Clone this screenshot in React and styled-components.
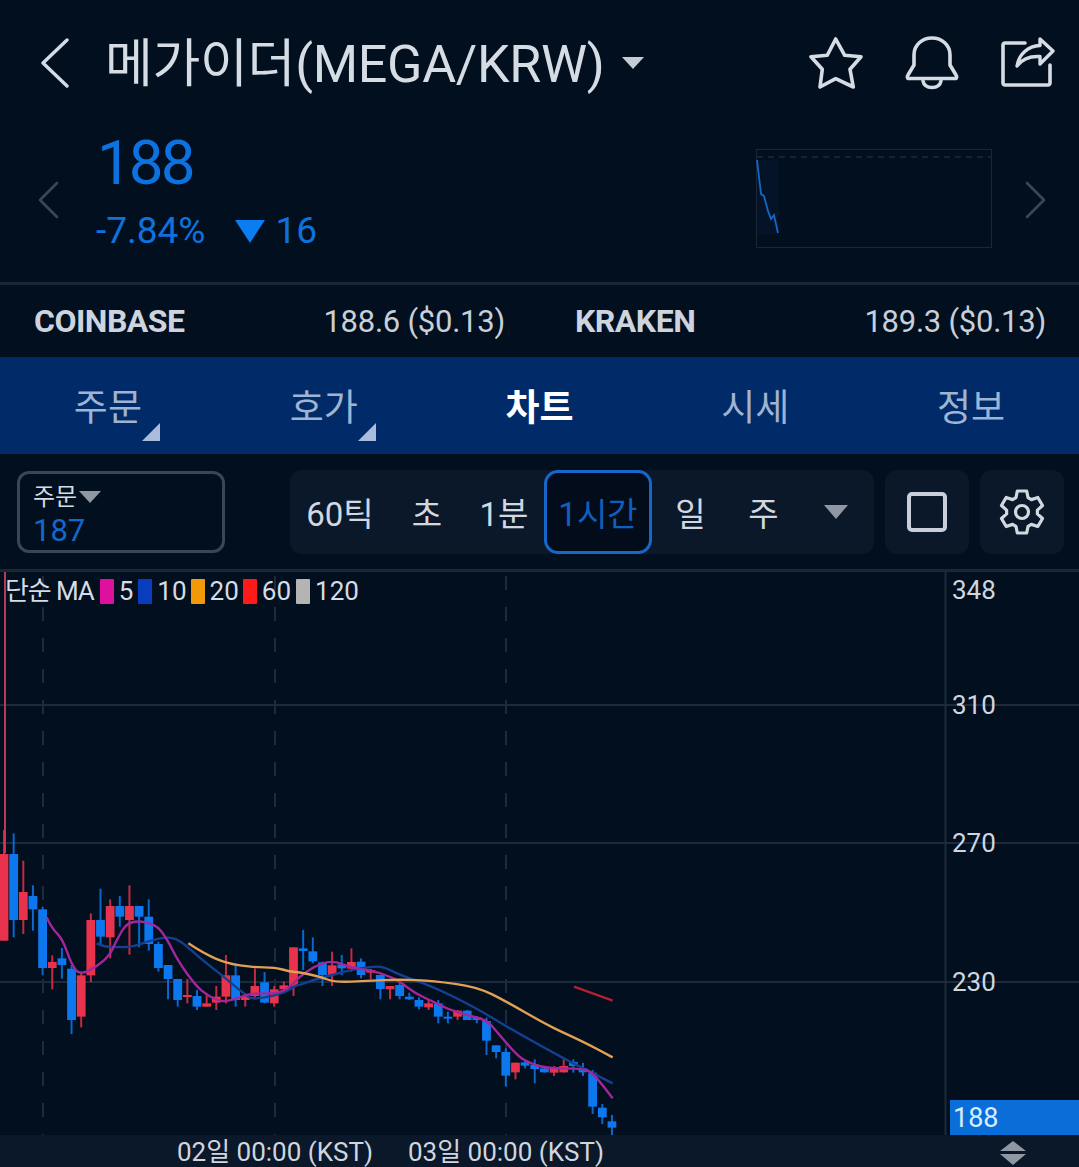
import React from 'react'
import styled, { createGlobalStyle } from 'styled-components'

const GlobalStyle = createGlobalStyle`
    html, body {
        margin: 0;
        padding: 0;
        background: #020f1f;
    }
    * {
        box-sizing: border-box;
    }
`;

const Page = styled.div`
    width: 1079px;
    height: 1167px;
    overflow: hidden;
    background: #020f1f;
    color: #d6dce4;
    font-family: Roboto, "Noto Sans CJK KR", sans-serif;
    display: flex;
    flex-direction: column;
`;

const Header = styled.header`
    height: 130px;
    display: flex;
    align-items: center;
    padding: 0 24px 4px 41px;
`;

const Title = styled.h1`
    margin: 0 0 8px 36px;
    font-size: 52px;
    font-weight: 400;
    letter-spacing: -0.3px;
    color: #d6dce4;
    white-space: nowrap;
`;

const TitleCaret = styled.span`
    width: 0;
    height: 0;
    margin-left: 17px;
    border-left: 11px solid transparent;
    border-right: 11px solid transparent;
    border-top: 12px solid #c6ccd4;
`;

const HeaderIcons = styled.div`
    margin-left: auto;
    display: flex;
    align-items: center;
    gap: 41px;
`;

const PriceRow = styled.section`
    height: 155px;
    border-bottom: 3px solid #1b2736;
    display: flex;
    align-items: center;
    padding: 0 33px 26px 38px;
`;

const PrevPad = styled.div`
    margin-top: 14px;
    display: flex;
`;

const PriceBlock = styled.div`
    margin-left: 38px;
    display: flex;
    flex-direction: column;
    gap: 10px;
    color: #0d72dd;
`;

const PriceValue = styled.div`
    font-size: 62px;
    line-height: 66px;
    letter-spacing: -3px;
`;

const ChangeRow = styled.div`
    display: flex;
    align-items: center;
    font-size: 37px;
    line-height: 50px;
    margin-left: -1px;
`;

const DownMark = styled.span`
    width: 0;
    height: 0;
    margin: 0 10px 0 30px;
    border-left: 15px solid transparent;
    border-right: 15px solid transparent;
    border-top: 23px solid #0a7df0;
`;

const Spark = styled.svg`
    margin-left: auto;
    margin-top: 11px;
    width: 236px;
    height: 99px;
`;

const NextPad = styled.div`
    margin: 14px 0 0 33px;
    display: flex;
`;

const ExchangeRow = styled.section`
    height: 72px;
    display: grid;
    grid-template-columns: 1fr 1fr;
    column-gap: 70px;
    padding: 0 33px 0 34px;
    align-items: center;
`;

const Exchange = styled.div`
    display: flex;
    justify-content: space-between;
    align-items: baseline;
    font-size: 31px;
    letter-spacing: -0.25px;
    color: #c8cfd9;
`;

const ExchangeName = styled.span`
    font-size: 32px;
    font-weight: 700;
    letter-spacing: -0.5px;
    color: #cdd4dd;
`;

const Tabs = styled.nav`
    height: 97px;
    display: flex;
    background: #012a68;
`;

const Tab = styled.div`
    position: relative;
    flex: 1;
    display: flex;
    align-items: center;
    justify-content: center;
    padding-bottom: 2px;
    font-size: 37px;
    font-weight: ${p => (p.$active ? 700 : 400)};
    color: ${p => (p.$active ? '#ffffff' : '#9fb3d2')};
`;

const TabCorner = styled.span`
    position: absolute;
    right: 56px;
    bottom: 13px;
    width: 0;
    height: 0;
    border-left: 18px solid transparent;
    border-bottom: 18px solid #a9bcdc;
`;

const Toolbar = styled.section`
    height: 118px;
    display: flex;
    align-items: center;
    padding: 0 15px 0 17px;
    border-bottom: 3px solid #1b2736;
`;

const OrderBox = styled.div`
    width: 208px;
    height: 82px;
    border: 3px solid #3b4654;
    border-radius: 12px;
    padding: 9px 13px;
    display: flex;
    flex-direction: column;
`;

const OrderLabel = styled.div`
    display: flex;
    align-items: center;
    font-size: 24px;
    line-height: 28px;
    color: #d6dce4;
`;

const OrderCaret = styled.span`
    width: 0;
    height: 0;
    margin-left: 2px;
    border-left: 11px solid transparent;
    border-right: 11px solid transparent;
    border-top: 12px solid #8f97a2;
`;

const OrderValue = styled.div`
    font-size: 31px;
    line-height: 39px;
    color: #1368c8;
`;

const Segments = styled.div`
    margin-left: 65px;
    width: 584px;
    height: 84px;
    display: flex;
    background: #0b182a;
    border-radius: 12px;
`;

const Segment = styled.div`
    width: ${p => p.$w}px;
    display: flex;
    align-items: center;
    justify-content: center;
    font-size: 33px;
    color: ${p => (p.$active ? '#0f5fbd' : '#d2d8e0')};
    background: ${p => (p.$active ? '#020c1b' : 'transparent')};
    border: ${p => (p.$active ? '3px solid #1667c9' : 'none')};
    border-radius: 14px;
`;

const SegmentCaret = styled.span`
    width: 0;
    height: 0;
    border-left: 12px solid transparent;
    border-right: 12px solid transparent;
    border-top: 14px solid #8f97a2;
`;

const SquareButton = styled.div`
    width: 84px;
    height: 84px;
    margin-left: 11px;
    display: flex;
    align-items: center;
    justify-content: center;
    background: #0b182a;
    border-radius: 12px;
`;

const Frame = styled.span`
    width: 40px;
    height: 40px;
    border: 4px solid #c8cfd8;
    border-radius: 5px;
`;

const ChartArea = styled.section`
    position: relative;
    flex: 1;
`;

const ChartSvg = styled.svg`
    display: block;
    width: 1079px;
    height: 100%;
`;

const Legend = styled.div`
    position: absolute;
    left: 5px;
    top: 3px;
    display: flex;
    align-items: center;
    font-size: 26px;
    line-height: 32px;
    color: #d6dce4;
`;

const LegendTitle = styled.span`
    margin-right: 6px;
    letter-spacing: -1.1px;
`;

const LegendText = styled.span`
    margin-right: ${p => p.$after || 4}px;
`;

const Swatch = styled.span`
    width: 14px;
    height: 25px;
    margin-right: 5px;
    border-radius: 1px;
    background: ${p => p.$color};
`;

const AxisLabel = styled.span`
    position: absolute;
    left: 952px;
    top: ${p => p.$top}px;
    font-size: 26px;
    line-height: 30px;
    color: #d0d6df;
`;

const LastPrice = styled.div`
    position: absolute;
    left: 950px;
    right: 0;
    bottom: 0;
    height: 35px;
    padding-left: 3px;
    background: #0a6ed8;
    color: #d8ecff;
    font-size: 27px;
    line-height: 37px;
`;

const TimeAxis = styled.footer`
    position: relative;
    height: 32px;
    background: #0b182a;
`;

const TimeLabel = styled.span`
    position: absolute;
    left: ${p => p.$left}px;
    top: 0;
    transform: translateX(-50%);
    font-size: 26px;
    line-height: 35px;
    white-space: nowrap;
    color: #d0d6df;
`;

const Scaler = styled.svg`
    position: absolute;
    left: 998px;
    top: 5px;
`;

const RED = '#e9304b';
const BLUE = '#0a78ee';

// [up?, wick top, body top, body bottom, wick bottom], y as read off the zoomed crops
const CANDLES_A = [
    [1, 0, 72, 332, 332], [0, 10, 72, 270, 322], [1, 92, 186, 270, 312], [0, 166, 198, 238, 302],
    [0, 230, 238, 414, 436], [1, 376, 396, 414, 478], [0, 354, 385, 405, 446], [0, 405, 416, 570, 612],
    [1, 428, 436, 560, 592], [1, 250, 270, 436, 456], [0, 176, 270, 320, 345], [1, 208, 228, 322, 385],
    [0, 198, 228, 260, 290], [1, 166, 228, 270, 374], [0, 228, 228, 260, 352], [0, 208, 260, 342, 362],
    [0, 335, 342, 414, 425], [0, 405, 405, 447, 508], [0, 447, 447, 510, 530], [1, 447, 495, 500, 520],
    [0, 480, 498, 530, 540], [1, 490, 520, 530, 530], [1, 468, 500, 518, 540], [1, 375, 436, 500, 520],
    [0, 408, 436, 510, 530], [1, 490, 498, 510, 530], [1, 415, 468, 498, 508], [0, 426, 457, 518, 520],
    [1, 468, 478, 520, 530], [1, 455, 466, 478, 490], [1, 352, 352, 468, 498],
];

const CANDLES_B = [
    [0, 30, 85, 93, 150], [0, 52, 94, 124, 130], [0, 125, 127, 165, 198], [1, 95, 136, 165, 198],
    [0, 105, 133, 145, 165], [1, 85, 126, 146, 155], [0, 115, 125, 165, 175], [1, 147, 150, 158, 178],
    [0, 165, 165, 207, 238], [1, 198, 198, 208, 238], [0, 185, 195, 228, 238], [0, 218, 230, 238, 240],
    [0, 232, 240, 260, 268], [1, 240, 250, 262, 270], [0, 240, 250, 290, 310], [0, 275, 290, 296, 310],
    [1, 270, 272, 290, 300], [0, 270, 272, 300, 300], [0, 288, 292, 300, 310], [0, 293, 303, 362, 405],
    [0, 376, 376, 396, 415], [0, 385, 396, 467, 500], [1, 428, 428, 457, 478], [0, 420, 427, 437, 445],
    [0, 418, 434, 447, 490], [0, 438, 445, 457, 458], [1, 438, 442, 458, 468], [1, 418, 438, 457, 458],
    [0, 418, 426, 438, 458], [0, 428, 445, 457, 468], [0, 450, 458, 560, 582], [0, 552, 563, 592, 612],
    [0, 585, 604, 623, 645],
];

const fromA = ([x, y]) => [x / 3, y / 3 + 258];
const fromB = ([x, y]) => [x / 3 + 300, y / 3 + 348];

// midpoint smoothing so the averages don't look like polylines
const smooth = pts => {
    let d = `M${pts[0][0]} ${pts[0][1]}`;
    for (let i = 1; i < pts.length - 1; i++) {
        const mx = (pts[i][0] + pts[i + 1][0]) / 2;
        const my = (pts[i][1] + pts[i + 1][1]) / 2;
        d += ` Q${pts[i][0]} ${pts[i][1]} ${mx} ${my}`;
    }
    const last = pts[pts.length - 1];
    return `${d} L${last[0]} ${last[1]}`;
};

const candles = [
    ...CANDLES_A.map(([up, ...ys]) => [up, ...ys.map(y => y / 3 + 258)]),
    ...CANDLES_B.map(([up, ...ys]) => [up, ...ys.map(y => y / 3 + 348)]),
];

const MA5 = smooth([
    ...[[140, 262], [155, 295], [187, 325], [215, 405], [240, 435], [290, 410], [330, 375], [350, 330], [385, 270], [465, 280], [500, 325], [535, 395], [590, 470], [622, 495], [650, 510], [680, 515], [738, 495], [767, 490], [850, 490], [900, 440]].map(fromA),
    ...[[0, 170], [40, 140], [97, 120], [155, 145], [213, 150], [270, 170], [300, 185], [345, 220], [400, 245], [445, 268], [500, 285], [560, 300], [590, 335], [650, 405], [680, 425], [735, 445], [850, 445], [880, 460], [938, 535]].map(fromB),
]);

const MA10 = smooth([
    ...[[290, 340], [310, 350], [360, 352], [400, 350], [440, 335], [500, 320], [540, 330], [600, 385], [665, 435], [730, 490], [760, 510], [850, 490], [890, 465]].map(fromA),
    ...[[0, 195], [40, 180], [97, 165], [150, 150], [213, 140], [250, 140], [300, 165], [400, 200], [530, 265], [620, 320], [790, 415], [850, 445], [938, 490]].map(fromB),
]);

const MA20 = smooth([
    ...[[565, 340], [610, 370], [680, 400], [760, 412], [825, 412], [870, 425]].map(fromA),
    ...[[0, 157], [60, 170], [105, 187], [200, 183], [300, 178], [400, 183], [530, 200], [620, 245], [740, 315], [850, 365], [938, 412]].map(fromB),
]);

const MA60 = smooth([[822, 200], [938, 242]].map(fromB));

const gearOutline = () => {
    const pts = [];
    for (let i = 0; i < 6; i++) {
        const a = -Math.PI / 2 + (i * Math.PI) / 3;
        [[15.5, -0.4], [21.5, -0.22], [21.5, 0.22], [15.5, 0.4]].forEach(([r, da]) => {
            pts.push(`${(24 + r * Math.cos(a + da)).toFixed(2)} ${(24 + r * Math.sin(a + da)).toFixed(2)}`);
        });
    }
    return `M${pts.join(' L')} Z`;
};

function Chevron({ dir, w, h, color, sw }) {
    const d = dir === 'left' ? `M${w - 2} 2 L2 ${h / 2} L${w - 2} ${h - 2}` : `M2 2 L${w - 2} ${h / 2} L2 ${h - 2}`;
    return (
        <svg width={w} height={h} viewBox={`0 0 ${w} ${h}`} fill="none">
            <path d={d} stroke={color} strokeWidth={sw} strokeLinecap="round" strokeLinejoin="round" />
        </svg>
    );
}

function StarIcon() {
    return (
        <svg width="54" height="52" viewBox="0 0 54 52" fill="none">
            <path d="M26.700 2 L35.700 18.300 L52 19.700 L41 32.300 L44.300 50 L26.700 41.700 L11 50 L13.300 32.300 L2 19.700 L18.300 18.300 Z" stroke="#d6dce4" strokeWidth="3.6" strokeLinejoin="round" />
        </svg>
    );
}

function BellIcon() {
    return (
        <svg width="56" height="54" viewBox="0 0 56 54" fill="none">
            <path d="M5 42.500 C3 42.500 3 40 4 39 L10 29 L10 19 C10 9 18 2 28 2 C38 2 46 9 46 19 L46 29 L52 39 C53 40 53 42.500 51 42.500 Z" stroke="#d6dce4" strokeWidth="3.6" strokeLinejoin="round" />
            <path d="M19 45 C20 50 24 51.500 28 51.500 C32 51.500 36 50 37 45" stroke="#d6dce4" strokeWidth="3.6" strokeLinecap="round" />
        </svg>
    );
}

function ShareIcon() {
    return (
        <svg width="54" height="52" viewBox="0 0 54 52" fill="none">
            <path d="M24 6 L4 6 C3 6 2 7 2 8 L2 46 C2 47 3 48 4 48 L47 48 C48 48 49 47 49 46 L49 28" stroke="#d6dce4" strokeWidth="3.6" strokeLinecap="round" />
            <path d="M39 2 L52 14 L39 27 L39 19.500 C30 19 21 22 16 29 C18 17 27 9 39 8.500 Z" stroke="#d6dce4" strokeWidth="3.400" strokeLinejoin="round" />
        </svg>
    );
}

function GearIcon() {
    return (
        <svg width="48" height="48" viewBox="0 0 48 48" fill="none" stroke="#d2d8e0" strokeWidth="3.2" strokeLinejoin="round">
            <path d={gearOutline()} />
            <circle cx="24" cy="24" r="6.500" />
        </svg>
    );
}

function Sparkline() {
    return (
        <Spark viewBox="0 0 236 99">
            <rect x="0.5" y="0.5" width="235" height="98" fill="none" stroke="#1b2736" />
            <line x1="1" y1="8" x2="235" y2="8" stroke="#1f2b3a" strokeWidth="1.5" strokeDasharray="6 5" />
            <rect x="1" y="11" width="21" height="74" fill="#0a1d3a" opacity="0.35" />
            <polyline points="1,11 5,45 8,47 12,62 15,70 18,66 22,84" fill="none" stroke="#1468c8" strokeWidth="1.8" />
        </Spark>
    );
}

function Chart() {
    return (
        <ChartSvg viewBox="0 0 1079 563">
            <defs>
                <filter id="soft" x="-5%" y="-5%" width="110%" height="110%">
                    <feGaussianBlur stdDeviation="0.45" />
                </filter>
            </defs>
            {[133, 271, 410].map(y => (
                <line key={y} x1="0" y1={y} x2="1079" y2={y} stroke="#1c2a3b" strokeWidth="2" />
            ))}
            {[43, 275, 506].map(x => (
                <line key={x} x1={x} y1="4" x2={x} y2="563" stroke="#1c2a3b" strokeWidth="2" strokeDasharray="14 17" />
            ))}
            <line x1="945.500" y1="0" x2="945.500" y2="563" stroke="#1c2a3b" strokeWidth="2" />
            <line x1="5" y1="0" x2="5" y2="281" stroke="#b83a55" strokeWidth="2" />
            <g filter="url(#soft)">
                {candles.map(([up, wt, bt, bb, wb], i) => {
                    const x = 4 + i * 9.65;
                    const color = up ? RED : BLUE;
                    return (
                        <g key={i}>
                            <line x1={x} y1={wt} x2={x} y2={wb} stroke={color} strokeWidth="2" opacity="0.85" />
                            <rect x={x - 4.400} y={bt} width="8.800" height={Math.max(bb - bt, 2)} fill={color} />
                        </g>
                    );
                })}
                <path d={MA10} fill="none" stroke="#13418f" strokeWidth="2.400" />
                <path d={MA5} fill="none" stroke="#a5279c" strokeWidth="2.400" />
                <path d={MA20} fill="none" stroke="#e0a155" strokeWidth="2.400" />
                <path d={MA60} fill="none" stroke="#b3202f" strokeWidth="2.400" />
            </g>
        </ChartSvg>
    );
}

function App() {
    return (
        <Page>
            <GlobalStyle />
            <Header>
                <Chevron dir="left" w={28} h={50} color="#d6dce4" sw={3.4} />
                <Title>메가이더(MEGA/KRW)</Title>
                <TitleCaret />
                <HeaderIcons>
                    <StarIcon />
                    <BellIcon />
                    <ShareIcon />
                </HeaderIcons>
            </Header>
            <PriceRow>
                <PrevPad>
                    <Chevron dir="left" w={21} h={38} color="#3c4654" sw={2.6} />
                </PrevPad>
                <PriceBlock>
                    <PriceValue>188</PriceValue>
                    <ChangeRow>
                        -7.84%
                        <DownMark />
                        16
                    </ChangeRow>
                </PriceBlock>
                <Sparkline />
                <NextPad>
                    <Chevron dir="right" w={21} h={38} color="#3c4654" sw={2.6} />
                </NextPad>
            </PriceRow>
            <ExchangeRow>
                <Exchange>
                    <ExchangeName>COINBASE</ExchangeName>
                    <span>188.6 ($0.13)</span>
                </Exchange>
                <Exchange>
                    <ExchangeName>KRAKEN</ExchangeName>
                    <span>189.3 ($0.13)</span>
                </Exchange>
            </ExchangeRow>
            <Tabs>
                <Tab>주문<TabCorner /></Tab>
                <Tab>호가<TabCorner /></Tab>
                <Tab $active>차트</Tab>
                <Tab>시세</Tab>
                <Tab>정보</Tab>
            </Tabs>
            <Toolbar>
                <OrderBox>
                    <OrderLabel>주문<OrderCaret /></OrderLabel>
                    <OrderValue>187</OrderValue>
                </OrderBox>
                <Segments>
                    <Segment $w={100}>60틱</Segment>
                    <Segment $w={74}>초</Segment>
                    <Segment $w={80}>1분</Segment>
                    <Segment $w={108} $active>1시간</Segment>
                    <Segment $w={77}>일</Segment>
                    <Segment $w={69}>주</Segment>
                    <Segment $w={76}><SegmentCaret /></Segment>
                </Segments>
                <SquareButton><Frame /></SquareButton>
                <SquareButton><GearIcon /></SquareButton>
            </Toolbar>
            <ChartArea>
                <Chart />
                <Legend>
                    <LegendTitle>단순 MA</LegendTitle>
                    <Swatch $color="#e0109f" />
                    <LegendText $after={5}>5</LegendText>
                    <Swatch $color="#0a3cbe" />
                    <LegendText>10</LegendText>
                    <Swatch $color="#f09a0a" />
                    <LegendText>20</LegendText>
                    <Swatch $color="#ff1a1a" />
                    <LegendText $after={5}>60</LegendText>
                    <Swatch $color="#b4b4b4" />
                    <LegendText>120</LegendText>
                </Legend>
                <AxisLabel $top={3}>348</AxisLabel>
                <AxisLabel $top={118}>310</AxisLabel>
                <AxisLabel $top={256}>270</AxisLabel>
                <AxisLabel $top={395}>230</AxisLabel>
                <LastPrice>188</LastPrice>
            </ChartArea>
            <TimeAxis>
                <TimeLabel $left={275}>02일 00:00 (KST)</TimeLabel>
                <TimeLabel $left={506}>03일 00:00 (KST)</TimeLabel>
                <Scaler width="30" height="26" viewBox="0 0 30 26">
                    <path d="M15 1 L28 11 L2 11 Z M15 25 L28 14 L2 14 Z" fill="#8f97a2" />
                </Scaler>
            </TimeAxis>
        </Page>
    );
}

export default App
